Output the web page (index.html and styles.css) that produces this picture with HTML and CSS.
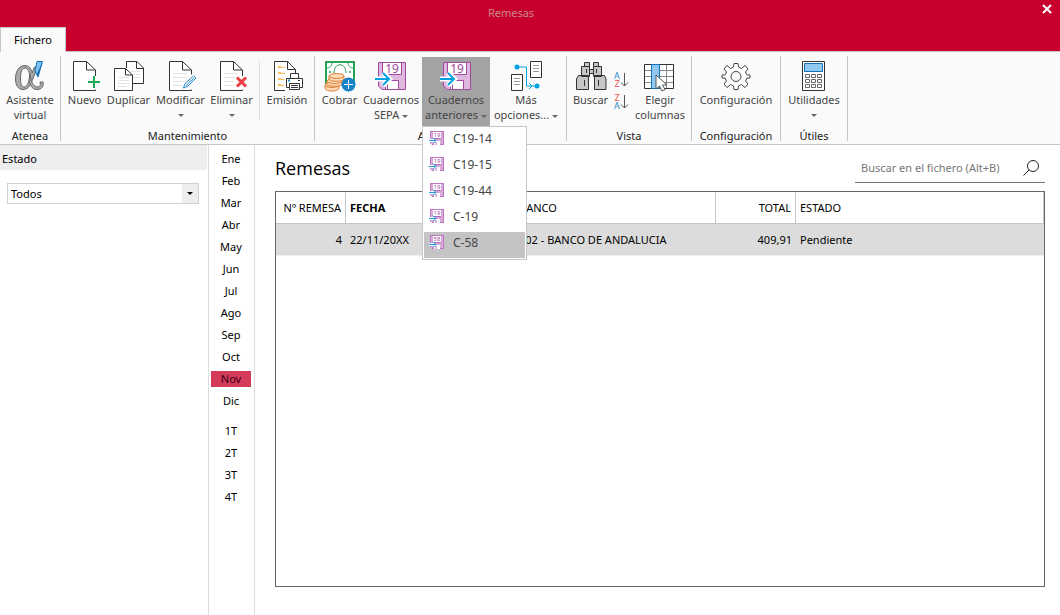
FILE: index.html
```html
<!DOCTYPE html>
<html lang="es">
<head>
<meta charset="utf-8">
<title>Remesas</title>
<link rel="stylesheet" href="styles.css">
</head>
<body>
<svg class="sprite" aria-hidden="true">
  <symbol id="page" viewBox="0 0 32 32">
    <path d="M26.500 28.500V29.500H4.500V.5H17.500L26.500 9V15" fill="#fff" stroke="#333"/>
    <path d="M17.500 .5V9H26.500" fill="none" stroke="#333"/>
  </symbol>
  <symbol id="disk" viewBox="0 0 32 32">
    <path d="M3.500 1.500H30.500V28.500H7L3.500 25Z" fill="#deb8df" stroke="#a0499f"/>
    <path d="M7.500 1.500H26.500V13.500H7.500ZM10.500 19.500H23.500V28.500H10.500Z" fill="#fff" stroke="#a0499f"/>
    <path d="M12.500 23V28" stroke="#a0499f"/>
    <path d="M0 18H14M8 11.500L14.500 18L8 24.500" fill="none" stroke="#fff" stroke-width="5"/>
    <path d="M0 18H14M8 12L14 18L8 24" fill="none" stroke="#00a2e1" stroke-width="2"/>
  </symbol>
  <symbol id="disk-small" viewBox="0 0 16 16">
    <path d="M1 0H15V14H3L1 12Z" fill="#d9a9da"/>
    <path d="M1 .5H15M1.500 0V12M14.500 0V14M3 13.500H15" stroke="#bd77bf" fill="none"/>
    <path d="M4 1H12V7H4ZM5 10H11V14H5Z" fill="#fff"/>
    <path d="M7 11V14M4.500 7.500H12" stroke="#b36ab5"/>
    <path d="M0 9.500H6" stroke="#fff" stroke-width="3"/>
    <path d="M0 9.500H6.500M4 6.500L7 9.500L4 12.500" fill="none" stroke="#1a9cd9"/>
  </symbol>
</svg>

<header class="titlebar">
  <h1 class="window-title">Remesas</h1>
  <button class="close" type="button" aria-label="Cerrar"><svg width="10" height="10" viewBox="0 0 10 10"><path d="M1 1L9 9M9 1L1 9" stroke="#fff" stroke-width="2"/></svg></button>
  <button class="tab" type="button">Fichero</button>
</header>

<nav class="ribbon" aria-label="Fichero">
  <section class="group">
    <div class="tools">
      <button class="tool w60" type="button">
        <svg class="icon" viewBox="0 0 32 32"><path d="M23.500 6L18 20C16 26 13 28.500 9 28.500C4 28.500 1.500 24 1.500 18C1.500 10 5 4.500 11 4.500C15 4.500 17 7 18 12L20.500 6ZM11 7C7.500 7 6.500 12 6.500 17C6.500 23 7.500 26 10 26C13 26 15 21 16 16C15 10 14 7 11 7Z" fill="#aaa" fill-rule="evenodd" stroke="#666"/><path d="M16 13C17 21 19 25 23 26C26 26 27 24 26 21H29C30 25 28 28.500 23 28.500C18 28.500 16 24 15 19Z" fill="#aaa" stroke="#666"/><path d="M23 .5H28.500L24 16L21 10Z" fill="#7fc1ed" stroke="#1371b8"/><path d="M28.500 .5L24 16L23 13Z" fill="#1371b8"/></svg>
        <span>Asistente<br>virtual</span>
      </button>
    </div>
    <h2 class="group-name">Atenea</h2>
  </section>

  <section class="group pad">
    <div class="tools">
      <button class="tool w39" type="button">
        <svg class="icon" viewBox="0 0 32 32"><use href="#page"/><path d="M19 21H31M25 15V27" stroke="#fafafa" stroke-width="5"/><path d="M19 21H31M25 15V27" stroke="#16a956" stroke-width="2"/></svg>
        <span>Nuevo</span>
      </button>
      <button class="tool w49" type="button">
        <svg class="icon" viewBox="0 0 32 32"><path d="M13.500 7V.5H24L30.500 7V22.500H20" fill="#fff" stroke="#333"/><path d="M23.500 .5V7.500H30.500" fill="none" stroke="#333"/><path d="M18 10.500H27M20 13.500H27M20 16.500H27" stroke="#e3e3e3"/><path d="M1.500 7.500H12.500L19.500 14V29.500H1.500Z" fill="#fff" stroke="#333"/><path d="M12.500 7.500V14H19.500" fill="none" stroke="#333"/><path d="M5 16.500H16M5 19.500H16M5 22.500H16M5 25.500H13" stroke="#e3e3e3"/></svg>
        <span>Duplicar</span>
      </button>
      <button class="tool w55" type="button">
        <svg class="icon" viewBox="0 0 32 32"><use href="#page"/><path d="M8 12.500H22M8 16.500H22M8 20.500H20M8 24.500H17" stroke="#e3e3e3"/><path d="M18 27L20 21L28 14L31 17L24 25Z" fill="#fff" stroke="#fafafa" stroke-width="3"/><path d="M18.500 27L20 22.500L28.500 15L31 17L23 25Z" fill="#fff" stroke="#258bcd"/><path d="M21 24.500L29 17" stroke="#258bcd"/></svg>
        <span>Modificar</span><i class="caret"></i>
      </button>
      <button class="tool w47" type="button">
        <svg class="icon" viewBox="0 0 32 32"><use href="#page"/><path d="M8 12.500H22M8 16.500H20M8 20.500H18M8 24.500H18" stroke="#e3e3e3"/><path d="M20.500 16L30 26M30 16L20.500 26" stroke="#fafafa" stroke-width="6"/><path d="M21 16.500L30 25.500M30 16.500L21 25.500" stroke="#ef3e42" stroke-width="3"/></svg>
        <span>Eliminar</span><i class="caret"></i>
      </button>
      <div class="divider"></div>
      <button class="tool w46" type="button">
        <svg class="icon" viewBox="0 0 32 32"><path d="M14 29.500H3.500V.5H16.500L24.500 8.500V12" fill="#fff" stroke="#333"/><path d="M16.500 .5V8.500H24.500" fill="none" stroke="#333"/><path d="M7 5.500H10M7 6.500H14M7 11.500H10M7 12.500H14M7 17.500H10M7 18.500H13M7 23.500H10M7 24.500H13" stroke="#f9bd62"/><path d="M19.500 17V12.500H27.500V17M19 26.500H15.500V17.500H31.500V26.500H28" fill="#fff" stroke="#333"/><path d="M18.500 22.500H28.500V28.500H18.500ZM20 24.500H27M20 26.500H27" fill="#fff" stroke="#333"/><path d="M27 19.500H29" stroke="#333"/><path d="M17 19.500H19" stroke="#258bcd" stroke-width="2"/></svg>
        <span>Emisión</span>
      </button>
    </div>
    <h2 class="group-name">Mantenimiento</h2>
  </section>

  <section class="group pad">
    <div class="tools">
      <button class="tool w41" type="button">
        <svg class="icon" viewBox="0 0 32 32"><path d="M2 1H30V22H2Z" fill="#fff" stroke="#23a455" stroke-width="2"/><path d="M2 7C6 7 8 5 8 1M24 1C24 5 26 7 30 7M10 12C10 1 22 1 22 12" fill="none" stroke="#23a455"/><circle cx="6" cy="11" r="1" fill="#23a455"/><circle cx="26" cy="11" r="1" fill="#23a455"/><g fill="#fdd9b7" stroke="#de8138"><path d="M1 24V27C1 31 15 31 15 27V24"/><ellipse cx="8" cy="24" rx="7" ry="2.500"/><path d="M3 20V23C3 26 18 26 18 23V20"/><ellipse cx="10.500" cy="20" rx="7.500" ry="2.500"/><path d="M5 15V18C5 21 20 21 20 18V15"/><ellipse cx="12.500" cy="15" rx="7.500" ry="2.500"/></g><circle cx="24.500" cy="23.500" r="7" fill="#1682c5"/><path d="M20 23.500H29M24.500 19V28" stroke="#fff"/></svg>
        <span>Cobrar</span>
      </button>
      <button class="tool w62" type="button">
        <svg class="icon" viewBox="0 0 32 32"><use href="#disk"/><text class="disk-number" x="17" y="12">19</text></svg>
        <span>Cuadernos<br>SEPA <i class="caret"></i></span>
      </button>
      <div class="dropdown">
        <button class="tool w68 open" type="button" aria-expanded="true">
          <svg class="icon" viewBox="0 0 32 32"><use href="#disk"/><text class="disk-number" x="17" y="12">19</text></svg>
          <span>Cuadernos<br>anteriores <i class="caret"></i></span>
        </button>
        <div class="menu">
          <button class="menu-item" type="button"><svg class="mini" viewBox="0 0 16 16"><use href="#disk-small"/><text class="mini-number" x="8" y="6">19</text></svg>C19-14</button>
          <button class="menu-item" type="button"><svg class="mini" viewBox="0 0 16 16"><use href="#disk-small"/><text class="mini-number" x="8" y="6">19</text></svg>C19-15</button>
          <button class="menu-item" type="button"><svg class="mini" viewBox="0 0 16 16"><use href="#disk-small"/><text class="mini-number" x="8" y="6">19</text></svg>C19-44</button>
          <button class="menu-item" type="button"><svg class="mini" viewBox="0 0 16 16"><use href="#disk-small"/><text class="mini-number" x="8" y="6">19</text></svg>C-19</button>
          <button class="menu-item current" type="button"><svg class="mini" viewBox="0 0 16 16"><use href="#disk-small"/><text class="mini-number" x="8" y="6">58</text></svg>C-58</button>
        </div>
      </div>
      <button class="tool w72" type="button">
        <svg class="icon" viewBox="0 0 32 32"><path d="M20.500 .5H31.500V16.500H20.500ZM1.500 13.500H12.500V29.500H1.500Z" fill="#fff" stroke="#333"/><path d="M23 4.500H29M23 7.500H29M23 10.500H29M4 17.500H10M4 20.500H10M4 23.500H10" stroke="#999"/><path d="M7 6H16.500V25H27M19 22L22 25L19 28" fill="none" stroke="#00a2e1"/><circle cx="7" cy="6" r="2.500" fill="#00a2e1"/><circle cx="27" cy="25" r="2.500" fill="#00a2e1"/></svg>
        <span>Más<br>opciones... <i class="caret"></i></span>
      </button>
    </div>
    <h2 class="group-name">Acciones</h2>
  </section>

  <section class="group pad">
    <div class="tools">
      <button class="tool w39" type="button">
        <svg class="icon" viewBox="0 0 32 32"><path d="M9.500 1.500H14.500V5.500H9.500ZM18.500 1.500H23.500V5.500H18.500ZM14 8.500H19V12.500H14Z" fill="#c9c7c5" stroke="#333"/><path d="M6.500 5.500H14.500V15.500H6.500ZM18.500 5.500H26.500V15.500H18.500ZM3.500 14.500H13.500V28.500H1.500V18ZM19.500 14.500H29.500L31 18V28.500H19.500Z" fill="#c9c7c5" stroke="#333"/><path d="M11.500 8V12M21.500 8V12M9.500 19V25M23.500 19V25" stroke="#333"/></svg>
        <span>Buscar</span>
      </button>
      <div class="sorts">
        <button class="sort" type="button" aria-label="Orden ascendente"><svg width="16" height="18" viewBox="0 0 16 18"><text class="letter blue" x="4" y="8">A</text><text class="letter red" x="4" y="16">Z</text><path d="M11.500 2V15M8 11.500L11.500 15L15 11.500" fill="none" stroke="#555"/></svg></button>
        <button class="sort" type="button" aria-label="Orden descendente"><svg width="16" height="18" viewBox="0 0 16 18"><text class="letter red" x="4" y="8">Z</text><text class="letter blue" x="4" y="16">A</text><path d="M11.500 2V15M8 11.500L11.500 15L15 11.500" fill="none" stroke="#555"/></svg></button>
      </div>
      <button class="tool w54" type="button">
        <svg class="icon" viewBox="0 0 32 32"><path d="M.5 3.500H29.500V27.500H.5Z" fill="#fff" stroke="#333"/><path d="M1 9.500H29M1 15.500H29M1 21.500H29M22.500 4V27" stroke="#888"/><path d="M7.500 3.500H15.500V27.500H7.500Z" fill="#8fc8f0" stroke="#1371b8"/><path d="M12 14V28L15.500 25L18 30L21 28.500L18.500 24H23Z" fill="#fff" stroke="#555"/></svg>
        <span>Elegir<br>columnas</span>
      </button>
    </div>
    <h2 class="group-name">Vista</h2>
  </section>

  <section class="group">
    <div class="tools">
      <button class="tool w88" type="button">
        <svg class="icon" viewBox="0 0 32 32"><path d="M13.500 6L14 2.500H18L18.500 6L21.500 7.500L25 4.500L28 8L25.500 11L27 14H30V17H27L25.500 20L28 23L25 26.500L21.500 23.500L18.500 25L18 28.500H14L13.500 25L10.500 23.500L7 26.500L4 23L6.500 20L5 17H2V14H5L6.500 11L4 8L7 4.500L10.500 7.500Z" fill="#fff" stroke="#444" stroke-linejoin="round"/><circle cx="16" cy="15.500" r="5" fill="#fafafa" stroke="#444"/></svg>
        <span>Configuración</span>
      </button>
    </div>
    <h2 class="group-name">Configuración</h2>
  </section>

  <section class="group">
    <div class="tools">
      <button class="tool w66" type="button">
        <svg class="icon" viewBox="0 0 32 32"><path d="M4.500 .5H26.500V29.500H4.500Z" fill="#fff" stroke="#333"/><path d="M6.500 2.500H24.500V10.500H6.500Z" fill="#8fc8f0" stroke="#1371b8"/><path d="M7.500 13.500H11.500V16.500H7.500ZM13.500 13.500H17.500V16.500H13.500ZM19.500 13.500H23.500V16.500H19.500ZM7.500 18.500H11.500V21.500H7.500ZM13.500 18.500H17.500V21.500H13.500ZM19.500 18.500H23.500V21.500H19.500ZM7.500 23.500H11.500V26.500H7.500ZM13.500 23.500H17.500V26.500H13.500ZM19.500 23.500H23.500V26.500H19.500Z" fill="#fff" stroke="#666"/></svg>
        <span>Utilidades</span><i class="caret"></i>
      </button>
    </div>
    <h2 class="group-name">Útiles</h2>
  </section>
</nav>

<div class="workspace">
  <aside class="filters">
    <label class="filter-title" for="estado">Estado</label>
    <div class="select-box">
      <select id="estado"><option>Todos</option></select>
      <span class="select-arrow"><i class="caret"></i></span>
    </div>
  </aside>

  <nav class="periods" aria-label="Periodo">
    <button class="period" type="button">Ene</button>
    <button class="period" type="button">Feb</button>
    <button class="period" type="button">Mar</button>
    <button class="period" type="button">Abr</button>
    <button class="period" type="button">May</button>
    <button class="period" type="button">Jun</button>
    <button class="period" type="button">Jul</button>
    <button class="period" type="button">Ago</button>
    <button class="period" type="button">Sep</button>
    <button class="period" type="button">Oct</button>
    <button class="period active" type="button">Nov</button>
    <button class="period" type="button">Dic</button>
    <button class="period quarter" type="button">1T</button>
    <button class="period" type="button">2T</button>
    <button class="period" type="button">3T</button>
    <button class="period" type="button">4T</button>
  </nav>

  <main class="content">
    <div class="content-head">
      <h2 class="content-title">Remesas</h2>
      <div class="search">
        <input class="search-input" type="text" placeholder="Buscar en el fichero (Alt+B)" aria-label="Buscar en el fichero">
        <svg width="18" height="18" viewBox="0 0 18 18"><circle cx="10" cy="7" r="5.500" fill="none" stroke="#222"/><path d="M6 11L.5 16.500" stroke="#222"/></svg>
      </div>
    </div>
    <div class="grid-box">
      <table class="grid">
        <thead>
          <tr><th class="num c-number">Nº REMESA</th><th class="c-date sorted">FECHA</th><th class="c-bank">BANCO</th><th class="num c-total">TOTAL</th><th>ESTADO</th></tr>
        </thead>
        <tbody>
          <tr><td class="num">4</td><td>22/11/20XX</td><td>002 - BANCO DE ANDALUCIA</td><td class="num">409,91</td><td>Pendiente</td></tr>
        </tbody>
      </table>
    </div>
  </main>
</div>
</body>
</html>
```

FILE: styles.css
```css
* { box-sizing: border-box; }

body {
  margin: 0;
  min-height: 100vh;
  display: flex;
  flex-direction: column;
  background: #fff;
  color: #000;
  font: 11px/15px "Noto Sans", "Open Sans", sans-serif;
}

button, input, select {
  font: inherit;
  color: inherit;
  background: none;
  border: 0;
  padding: 0;
  margin: 0;
}

h1, h2 { margin: 0; font-size: inherit; font-weight: 400; }
svg { display: block; overflow: visible; }
.sprite { position: absolute; width: 0; height: 0; }

.titlebar {
  display: grid;
  grid-template-columns: 1fr auto 1fr;
  grid-template-rows: 27px 24px;
  background: #c8002d;
}
.window-title { grid-column: 2; align-self: center; padding: 0 38px 2px 0; color: #c98a8a; }
.close { grid-column: 3; justify-self: end; align-self: start; padding: 4px 8px; }
.tab {
  grid-row: 2;
  grid-column: 1;
  justify-self: start;
  width: 66px;
  margin-bottom: -1px;
  padding-bottom: 1px;
  background: #fafafa;
  border: 1px solid #c6c6c6;
  border-bottom: 0;
  position: relative;
}

.ribbon {
  display: flex;
  padding: 4px 0 3px;
  background: #fafafa;
  border-top: 1px solid #c6c6c6;
  border-bottom: 1px solid #c6c6c6;
}
.group {
  display: flex;
  flex-direction: column;
  border-right: 1px solid #c6c6c6;
}
.tools { display: flex; height: 74px; padding-top: 1px; }
.pad .tools { padding: 1px 4px 0; }
.group-name { text-align: center; line-height: 11px; color: #222; }
.tool {
  display: flex;
  flex-direction: column;
  align-items: center;
  height: 69px;
  padding-top: 4px;
  color: #444;
  white-space: nowrap;
}
.icon { width: 32px; height: 32px; margin-bottom: -1px; flex: none; }
.w39 { width: 39px; }
.w41 { width: 41px; }
.w46 { width: 46px; }
.w47 { width: 47px; }
.w49 { width: 49px; }
.w54 { width: 54px; }
.w55 { width: 55px; }
.w60 { width: 60px; }
.w62 { width: 62px; }
.w66 { width: 66px; }
.w68 { width: 68px; }
.w72 { width: 72px; }
.w88 { width: 88px; }
.open { background: #a3a3a3; }
.divider { width: 1px; height: 60px; margin: 4px; background: #dedede; }

.caret {
  display: inline-block;
  border: 3px solid transparent;
  border-top-color: #666;
  border-bottom: 0;
  vertical-align: middle;
}
.tool > .caret { margin-top: 7px; }

.disk-number { font-size: 12px; fill: #a0499f; text-anchor: middle; }
.mini-number { font-size: 6px; fill: #a0499f; text-anchor: middle; }
.letter { font-size: 9px; text-anchor: middle; }
.blue { fill: #258bcd; }
.red { fill: #ef5356; }

.sorts { display: flex; flex-direction: column; gap: 4px; width: 23px; padding: 14px 0 0 3px; }
.sort { width: 16px; height: 18px; }

.dropdown { position: relative; }
.menu {
  position: absolute;
  top: 69px;
  left: 0;
  z-index: 2;
  width: 105px;
  padding: 1px;
  background: #fff;
  border: 1px solid #c6c6c6;
}
.menu-item {
  display: flex;
  align-items: center;
  gap: 8px;
  width: 100%;
  height: 26px;
  padding: 0 5px 5px;
  color: #444;
  font-size: 12px;
}
.mini { width: 16px; height: 16px; }
.current { background: #c4c4c4; }

.workspace { flex: 1; display: flex; }
.filters { width: 208px; border-right: 1px solid #fff; }
.filter-title { display: block; padding: 6px 2px 4px; background: #eee; }
.select-box {
  display: grid;
  grid-template-columns: 1fr 16px;
  margin: 13px 8px 0 7px;
  border: 1px solid #d0d0d0;
}
.select-box select {
  grid-area: 1 / 1 / 2 / 3;
  height: 19px;
  padding-left: 3px;
  appearance: none;
}
.select-arrow {
  grid-area: 1 / 2;
  display: grid;
  place-items: center;
  background: #eee;
  pointer-events: none;
}
.select-arrow .caret { border-top-color: #000; }

.periods {
  display: flex;
  flex-direction: column;
  align-items: stretch;
  gap: 6px;
  width: 47px;
  padding: 6px 3px 0 2px;
  border-left: 1px solid #dcdcdc;
  border-right: 1px solid #dcdcdc;
}
.period { height: 16px; line-height: 16px; }
.active { background: #d43a59; color: #3a0015; }
.quarter { margin-top: 8px; }

.content {
  flex: 1;
  display: flex;
  flex-direction: column;
  min-width: 0;
  padding: 8px 15px 28px 20px;
}
.content-head {
  display: flex;
  justify-content: space-between;
  align-items: flex-start;
  height: 38px;
}
.content-title { font: 18px/30px "Open Sans", "Noto Sans", sans-serif; }
.search {
  display: flex;
  align-items: center;
  width: 190px;
  height: 30px;
  padding: 0 4px 0 6px;
  border-bottom: 1px solid #777;
}
.search-input { flex: 1; min-width: 0; outline: 0; }
.search-input::placeholder { color: #777; opacity: 1; }

.grid-box { flex: 1; border: 1px solid #666; }
.grid {
  width: 100%;
  table-layout: fixed;
  border-collapse: separate;
  border-spacing: 0;
}
.grid th, .grid td {
  height: 32px;
  padding: 0 4px;
  text-align: left;
  font-weight: 400;
  white-space: nowrap;
}
.grid th { border-right: 1px solid #c6c6c6; border-bottom: 1px solid #c6c6c6; }
.grid td { background: #dcdcdc; border-bottom: 1px solid #eee; }
.grid .sorted { font-weight: 700; }
.grid .num { text-align: right; }
.c-number { width: 70px; }
.c-date { width: 169px; }
.c-bank { width: 201px; }
.c-total { width: 80px; }
```
